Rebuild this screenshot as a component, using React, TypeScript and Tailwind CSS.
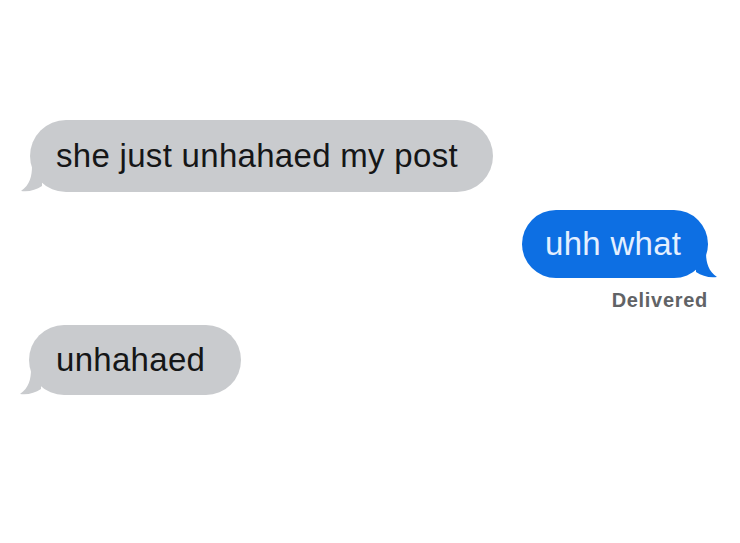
const LeftTail = ({ color }: { color: string }) => (
  <svg className="absolute -left-[9px] bottom-0" width="26" height="26" viewBox="0 0 26 26">
    <path d="M11 0 C11 10 9 19 0 25 C8 26 15 24 21 20 L21 0 Z" fill={color} />
  </svg>
);

const RightTail = ({ color }: { color: string }) => (
  <svg className="absolute -right-[9px] bottom-0" width="26" height="26" viewBox="0 0 26 26">
    <path d="M15 0 C15 10 17 19 26 25 C18 26 11 24 5 20 L5 0 Z" fill={color} />
  </svg>
);

const App = () => {
  return (
    <div
      className="w-[740px] h-[543px] bg-white flex flex-col pt-[120px]"
      style={{ fontFamily: '"Liberation Sans", Arial, sans-serif' }}
    >
      <div className="relative self-start ml-[30px] h-[72px] w-[463px] rounded-[36px] bg-[#c9cbce] flex items-center pl-[26px]">
        <LeftTail color="#c9cbce" />
        <span className="relative text-[33px] text-[#151617] tracking-[0.3px]">she just unhahaed my post</span>
      </div>

      <div className="relative self-end mr-[32px] mt-[18px] h-[68px] w-[186px] rounded-[34px] bg-[#0d6fe3] flex items-center pl-[23px]">
        <RightTail color="#0d6fe3" />
        <span className="relative text-[33px] text-[#e4efff] tracking-[0.3px]">uhh what</span>
      </div>

      <div className="self-end mr-[32px] mt-[12px] text-[20px] font-bold text-[#616366] tracking-[0.7px] leading-none">
        Delivered
      </div>

      <div className="relative self-start ml-[29px] mt-[15px] h-[70px] w-[212px] rounded-[35px] bg-[#c9cbce] flex items-center pl-[27px]">
        <LeftTail color="#c9cbce" />
        <span className="relative text-[33px] text-[#151617] tracking-[0.3px]">unhahaed</span>
      </div>
    </div>
  );
};

export default App;
